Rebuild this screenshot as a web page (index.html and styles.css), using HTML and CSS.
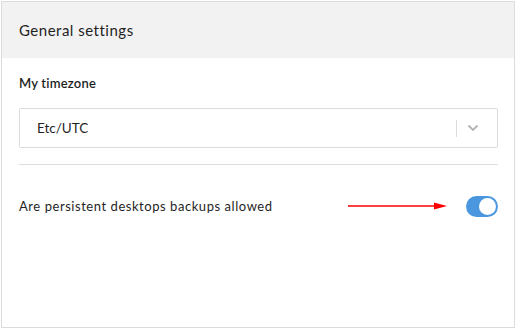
FILE: index.html
```html
<!DOCTYPE html>
<html>
<head>
<meta charset="utf-8">
<link rel="stylesheet" href="styles.css">
</head>
<body>
<div class="panel">
  <div class="panel-header">General settings</div>
  <div class="panel-body">
    <div class="field-label">My timezone</div>
    <div class="select">
      <span class="select-value">Etc/UTC</span>
      <span class="select-sep"></span>
      <svg class="chevron" width="12" height="8" viewBox="0 0 12 8"><path d="M1.5 1.5 L6 6 L10.5 1.5" fill="none" stroke="#b3b3b3" stroke-width="1.8"/></svg>
    </div>
    <div class="divider"></div>
    <div class="row">
      <span class="row-label">Are persistent desktops backups allowed</span>
      <svg class="arrow" width="100" height="10" viewBox="0 0 100 10"><line x1="0" y1="5" x2="88" y2="5" stroke="#ff0000" stroke-width="1.4"/><polygon points="86,1.5 99,5 86,8.5" fill="#ff0000"/></svg>
      <span class="toggle"><span class="knob"></span></span>
    </div>
  </div>
</div>
</body>
</html>
```
FILE: styles.css
```css
* { box-sizing: border-box; }
html, body { margin: 0; padding: 0; background: #fff; }
body { padding: 1px; font-family: Lato, "Open Sans", sans-serif; color: #1f1f1f; }
.panel {
  width: 514px;
  height: 327px;
  border: 1px solid #dcdcdc;
  background: #fff;
}
.panel-header {
  height: 56px;
  background: #f2f2f2;
  padding: 0 17px;
  display: flex;
  align-items: center;
  font-size: 15px;
  letter-spacing: 0.5px;
}
.panel-body { padding: 17px 16px 0 17px; }
.field-label { font-size: 13px; font-weight: 600; height: 16px; line-height: 16px; letter-spacing: 0.2px; }
.select {
  margin-top: 17px;
  height: 40px;
  border: 1px solid #dcdcdc;
  border-radius: 2px;
  display: flex;
  align-items: center;
  padding: 0 18px 0 17px;
}
.select-value { font-size: 13.5px; flex: 1; }
.select-sep { width: 1px; height: 17px; background: #dcdcdc; margin-right: 10px; }
.chevron { display: block; }
.divider { height: 1px; background: #dedede; margin-top: 16px; }
.row { display: flex; align-items: center; height: 30px; margin-top: 26px; }
.row-label { font-size: 13px; flex: 1; letter-spacing: 0.55px; }
.arrow { display: block; margin-right: 18px; }
.toggle {
  width: 32px;
  height: 21px;
  border-radius: 11px;
  background: #4a97e0;
  position: relative;
  display: block;
}
.knob {
  position: absolute;
  right: 2px;
  top: 2px;
  width: 17px;
  height: 17px;
  border-radius: 50%;
  background: #fff;
}
```
